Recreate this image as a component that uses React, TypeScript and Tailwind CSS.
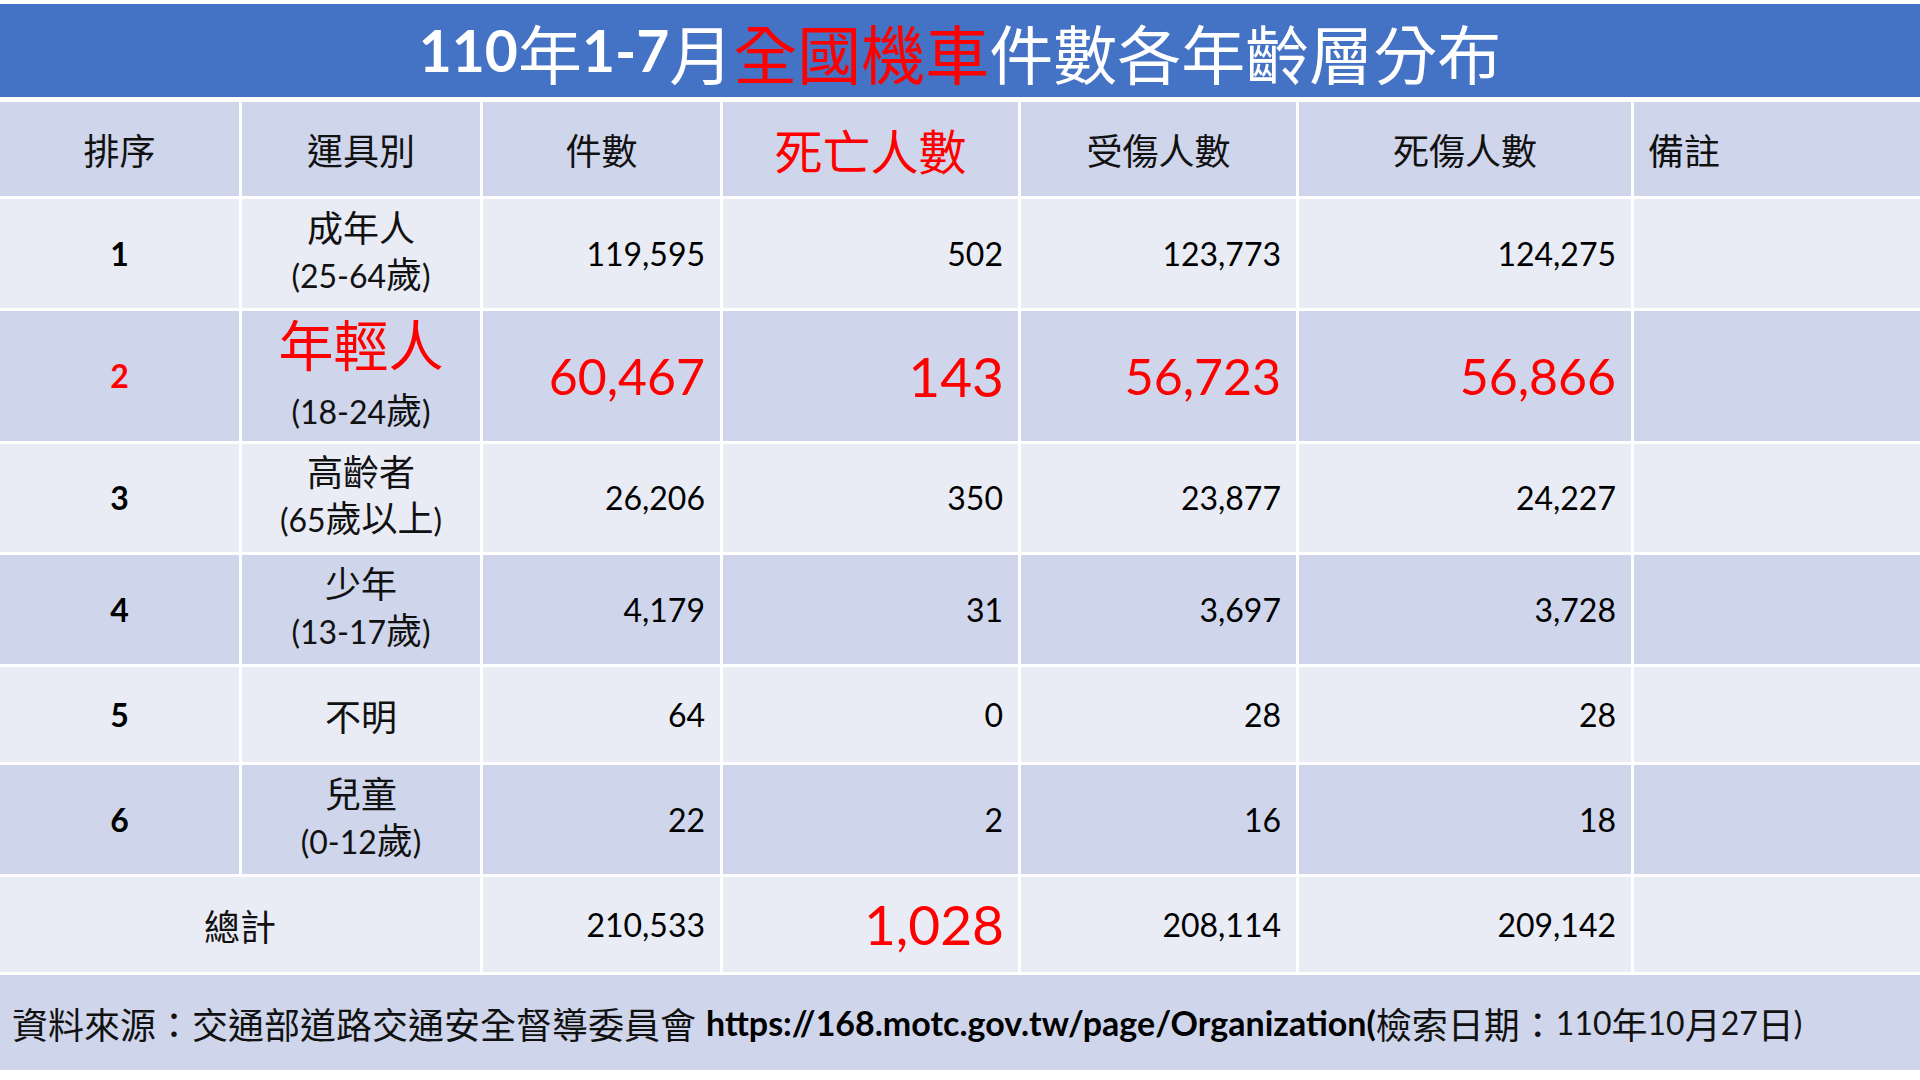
import React from 'react'

const CJK_RE = /([\u2E80-\u9FFF\uF900-\uFAFF\uFF00-\uFFEF]+)/

// splits text into latin / CJK runs so each can get its own face and size
function Mixed({ text, latin, cjk }: { text: string; latin: string; cjk: string }) {
  const parts = text.split(CJK_RE).filter(Boolean)
  return (
    <>
      {parts.map((p, i) =>
        CJK_RE.test(p) ? (
          <span key={i} className={cjk}>
            {p}
          </span>
        ) : (
          <span key={i} className={latin}>
            {p}
          </span>
        )
      )}
    </>
  )
}

const cols = 'grid grid-cols-[239px_238px_237px_295px_275px_332px_1fr] gap-x-[3px]'
const cjk36 = "font-['Noto_Sans_CJK_TC',sans-serif] text-[36px]"
const lato32 = "font-['Lato',sans-serif] text-[32px]"
const numCell = "flex items-center justify-end pr-[15px] font-['Lato',sans-serif] text-[32px] text-black"
const bigNumCell = "flex items-center justify-end pr-[15px] font-['Lato',sans-serif] text-[50px] text-[#ff0000]"
const deadBigCell = "flex items-center justify-end pr-[14px] font-['Lato',sans-serif] text-[55px] text-[#ff0000]"

type Row = {
  rank: string
  label: string
  age?: string
  cases: string
  dead: string
  hurt: string
  total: string
  height: string
  bg: string
  hot?: boolean
}

const rows: Row[] = [
  { rank: '1', label: '成年人', age: '(25-64歲)', cases: '119,595', dead: '502', hurt: '123,773', total: '124,275', height: 'h-[109px]', bg: 'bg-[#e9ebf5]' },
  { rank: '2', label: '年輕人', age: '(18-24歲)', cases: '60,467', dead: '143', hurt: '56,723', total: '56,866', height: 'h-[130px]', bg: 'bg-[#cfd5ea]', hot: true },
  { rank: '3', label: '高齡者', age: '(65歲以上)', cases: '26,206', dead: '350', hurt: '23,877', total: '24,227', height: 'h-[108px]', bg: 'bg-[#e9ebf5]' },
  { rank: '4', label: '少年', age: '(13-17歲)', cases: '4,179', dead: '31', hurt: '3,697', total: '3,728', height: 'h-[109px]', bg: 'bg-[#cfd5ea]' },
  { rank: '5', label: '不明', cases: '64', dead: '0', hurt: '28', total: '28', height: 'h-[95px]', bg: 'bg-[#e9ebf5]' },
  { rank: '6', label: '兒童', age: '(0-12歲)', cases: '22', dead: '2', hurt: '16', total: '18', height: 'h-[109px]', bg: 'bg-[#cfd5ea]' },
]

function DataRow({ r }: { r: Row }) {
  const cell = r.bg
  return (
    <div className={`${cols} ${r.height}`}>
      <div
        className={`${cell} flex items-center justify-center font-['Lato',sans-serif] text-[32px] font-bold ${
          r.hot ? 'text-[#ff0000]' : 'text-black'
        }`}
      >
        {r.rank}
      </div>
      <div className={`${cell} flex flex-col items-center justify-center text-[#111]`}>
        {r.hot ? (
          <>
            <div className="font-['Noto_Sans_CJK_TC',sans-serif] text-[55px] leading-[60px] text-[#ff0000]">{r.label}</div>
            <div className="mt-[13px] leading-[46px] whitespace-nowrap">
              <Mixed text={r.age ?? ''} latin={lato32} cjk={cjk36} />
            </div>
          </>
        ) : (
          <>
            <div className={`${cjk36} leading-[46px]`}>{r.label}</div>
            {r.age && (
              <div className="leading-[46px] whitespace-nowrap">
                <Mixed text={r.age} latin={lato32} cjk={cjk36} />
              </div>
            )}
          </>
        )}
      </div>
      {r.hot ? (
        <>
          <div className={`${cell} ${bigNumCell}`}>{r.cases}</div>
          <div className={`${cell} ${deadBigCell}`}>{r.dead}</div>
          <div className={`${cell} ${bigNumCell}`}>{r.hurt}</div>
          <div className={`${cell} ${bigNumCell}`}>{r.total}</div>
        </>
      ) : (
        <>
          <div className={`${cell} ${numCell}`}>{r.cases}</div>
          <div className={`${cell} ${numCell}`}>{r.dead}</div>
          <div className={`${cell} ${numCell}`}>{r.hurt}</div>
          <div className={`${cell} ${numCell}`}>{r.total}</div>
        </>
      )}
      <div className={cell} />
    </div>
  )
}

export default function App() {
  const head = `bg-[#cfd5ea] flex items-center justify-center ${cjk36} text-[#111]`
  return (
    <div className="w-[1920px] h-[1080px] bg-white overflow-hidden">
      <div className="mt-[4px] h-[93px] bg-[#4472c4] flex items-center justify-center text-white whitespace-nowrap">
        <span className="font-['Lato',sans-serif] font-bold text-[57px]">110</span>
        <span className="font-['Noto_Sans_CJK_TC',sans-serif] text-[64px]">年</span>
        <span className="font-['Lato',sans-serif] font-bold text-[57px]">1-7</span>
        <span className="font-['Noto_Sans_CJK_TC',sans-serif] text-[64px]">月</span>
        <span className="font-['Noto_Sans_CJK_TC',sans-serif] text-[64px] text-[#ff0000]">全國機車</span>
        <span className="font-['Noto_Sans_CJK_TC',sans-serif] text-[64px]">件數各年齡層分布</span>
      </div>

      <div className="mt-[5px] flex flex-col gap-y-[3px]">
        <div className={`${cols} h-[94px]`}>
          <div className={head}>排序</div>
          <div className={head}>運具別</div>
          <div className={head}>件數</div>
          <div className="bg-[#cfd5ea] flex items-center justify-center font-['Noto_Sans_CJK_TC',sans-serif] text-[48px] text-[#ff0000]">
            死亡人數
          </div>
          <div className={head}>受傷人數</div>
          <div className={head}>死傷人數</div>
          <div className={`bg-[#cfd5ea] flex items-center pl-[14px] ${cjk36} text-[#111]`}>備註</div>
        </div>

        {rows.map((r) => (
          <DataRow key={r.rank} r={r} />
        ))}

        <div className={`${cols} h-[95px]`}>
          <div className={`col-span-2 bg-[#e9ebf5] flex items-center justify-center ${cjk36} text-[#111]`}>總計</div>
          <div className={`bg-[#e9ebf5] ${numCell}`}>210,533</div>
          <div className={`bg-[#e9ebf5] ${deadBigCell}`}>1,028</div>
          <div className={`bg-[#e9ebf5] ${numCell}`}>208,114</div>
          <div className={`bg-[#e9ebf5] ${numCell}`}>209,142</div>
          <div className="bg-[#e9ebf5]" />
        </div>

        <div className="h-[95px] bg-[#cfd5ea] flex items-center pl-[12px] whitespace-nowrap text-[#111]">
          <span className={cjk36}>資料來源：交通部道路交通安全督導委員會</span>
          <span className="font-['Lato',sans-serif] text-[34px] font-bold text-black ml-[10px]">
            https://168.motc.gov.tw/page/Organization(
          </span>
          <Mixed text="檢索日期：110年10月27日)" latin={lato32} cjk={cjk36} />
        </div>
      </div>
    </div>
  )
}
